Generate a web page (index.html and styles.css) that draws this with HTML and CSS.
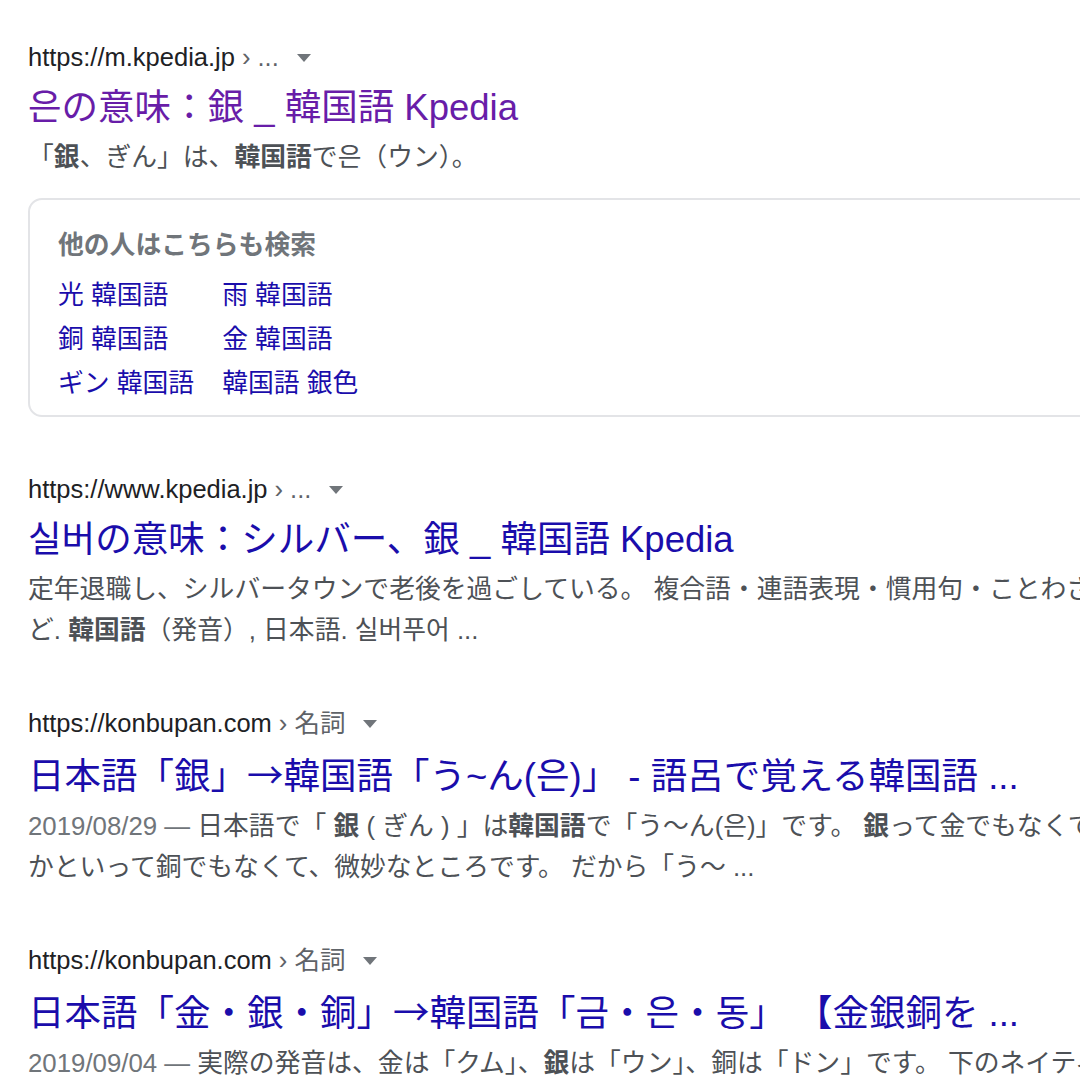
FILE: index.html
```html
<!DOCTYPE html>
<html lang="ja">
<head>
<meta charset="utf-8">
<title>検索結果</title>
<link rel="stylesheet" href="styles.css">
</head>
<body>
<main class="results">
  <div class="result">
    <div class="cite"><span class="host">https://m.kpedia.jp</span><span class="crumb">› ...</span><span class="caret"></span></div>
    <h3 class="title visited">은の意味：銀 _ 韓国語 Kpedia</h3>
    <div class="snippet">「<b>銀</b>、ぎん」は、<b>韓国語</b>で은（ウン）。</div>
    <div class="also">
      <div class="also-head">他の人はこちらも検索</div>
      <div class="also-grid">
        <a class="also-link">光 韓国語</a>
        <a class="also-link">雨 韓国語</a>
        <a class="also-link">銅 韓国語</a>
        <a class="also-link">金 韓国語</a>
        <a class="also-link">ギン 韓国語</a>
        <a class="also-link">韓国語 銀色</a>
      </div>
    </div>
  </div>

  <div class="result">
    <div class="cite"><span class="host">https://www.kpedia.jp</span><span class="crumb">› ...</span><span class="caret"></span></div>
    <h3 class="title">실버の意味：シルバー、銀 _ 韓国語 Kpedia</h3>
    <div class="snippet">定年退職し、シルバータウンで老後を過ごしている。 複合語・連語表現・慣用句・ことわざなど. <b>韓国語</b>（発音）, 日本語. 실버푸어 ...</div>
  </div>

  <div class="result">
    <div class="cite"><span class="host">https://konbupan.com</span><span class="crumb">› 名詞</span><span class="caret"></span></div>
    <h3 class="title">日本語「銀」<span class="arrow">→</span>韓国語「う~ん(은)」 - 語呂で覚える韓国語 ...</h3>
    <div class="snippet"><span class="date">2019/08/29 — </span>日本語で「 <b>銀</b> ( ぎん ) 」は<b>韓国語</b>で「う〜ん(은)」です。 <b>銀</b>って金でもなくて、かといって銅でもなくて、微妙なところです。 だから「う〜 ...</div>
  </div>

  <div class="result">
    <div class="cite"><span class="host">https://konbupan.com</span><span class="crumb">› 名詞</span><span class="caret"></span></div>
    <h3 class="title">日本語「金・銀・銅」<span class="arrow">→</span>韓国語「금・은・동」 【金銀銅を ...</h3>
    <div class="snippet"><span class="date">2019/09/04 — </span>実際の発音は、金は「クム」、<b>銀</b>は「ウン」、銅は「ドン」です。 下のネイティブ音声で確認してください。</div>
  </div>
</main>
</body>
</html>
```

FILE: styles.css
```css
html, body {
  margin: 0;
  padding: 0;
  background: #ffffff;
}

body {
  overflow: hidden;
  font-family: "Liberation Sans", "Noto Sans CJK JP", "Noto Sans CJK KR", sans-serif;
  color: #4d5156;
}

.results {
  width: 1094px;
  padding: 41px 0 0 28px;
  display: flex;
  flex-direction: column;
  gap: 56px;
}

.result {
  display: flex;
  flex-direction: column;
}

.cite {
  display: flex;
  align-items: center;
  white-space: nowrap;
  font-size: 25.5px;
  line-height: 32px;
  color: #202124;
}

.crumb {
  color: #5f6368;
  margin-left: 7px;
}

.caret {
  width: 0;
  height: 0;
  margin-left: 18px;
  margin-top: 2px;
  border-left: 7px solid transparent;
  border-right: 7px solid transparent;
  border-top: 8px solid #70757a;
}

.title {
  margin: 12px 0 0 0;
  font-size: 36.5px;
  line-height: 46px;
  font-weight: normal;
  color: #1a0dab;
  white-space: nowrap;
}

.title.visited {
  color: #681da8;
}

.arrow {
  font-family: "Noto Sans CJK JP", sans-serif;
}

.snippet {
  margin-top: 6px;
  font-size: 25.8px;
  line-height: 41px;
  color: #4d5156;
}

.snippet b {
  font-weight: bold;
  color: #4d5156;
}

.date {
  color: #70757a;
}

.also {
  margin-top: 20px;
  width: 1100px;
  border: 2px solid #e3e4e7;
  border-radius: 14px;
  padding: 27px 28px 10px;
}

.also-head {
  font-size: 25.8px;
  line-height: 36px;
  font-weight: bold;
  color: #70757a;
}

.also-grid {
  margin-top: 10px;
  display: grid;
  grid-template-columns: max-content max-content;
  column-gap: 28px;
}

.also-link {
  font-size: 25.8px;
  line-height: 44px;
  color: #1a0dab;
  text-decoration: none;
}
```
